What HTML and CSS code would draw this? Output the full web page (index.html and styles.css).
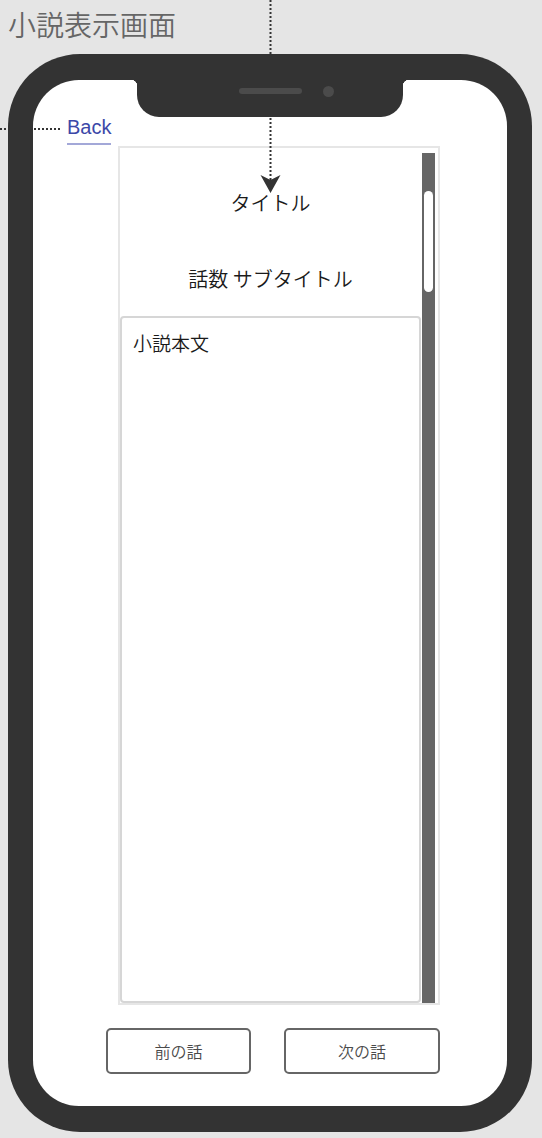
FILE: index.html
```html
<!DOCTYPE html>
<html lang="ja">
<head>
  <meta charset="UTF-8" />
  <meta name="viewport" content="width=device-width, initial-scale=1.0"/>
  <title>小説表示画面</title>
  <link rel="stylesheet" href="styles.css">
</head>
<body>
  <h1 class="page-title">小説表示画面</h1>

  <div class="phone">
    <div class="screen">
      <div class="notch">
        <span class="speaker"></span>
        <span class="camera"></span>
      </div>

      <div class="back-row">
        <a href="#" class="back-link">Back</a>
      </div>

      <div class="panel">
        <div class="reader">
          <div class="heading">
            <p class="novel-title">タイトル</p>
            <p class="episode-title">話数 サブタイトル</p>
          </div>
          <div class="novel-body">小説本文</div>
        </div>
        <div class="scrollbar">
          <div class="scroll-thumb"></div>
        </div>
      </div>

      <div class="nav-buttons">
        <button type="button" class="nav-btn prev">前の話</button>
        <button type="button" class="nav-btn next">次の話</button>
      </div>
    </div>
  </div>

  <!-- annotation lines drawn over the mockup (skipping the phone frame) -->
  <svg class="annotation" width="542" height="200" viewBox="0 0 542 200">
    <line x1="270.5" y1="0" x2="270.5" y2="54" stroke="#333" stroke-width="2" stroke-dasharray="2 2"/>
    <line x1="270.5" y1="118" x2="270.5" y2="180" stroke="#333" stroke-width="2" stroke-dasharray="2 2"/>
    <line x1="0" y1="129" x2="8" y2="129" stroke="#333" stroke-width="2" stroke-dasharray="2 2"/>
    <line x1="34" y1="129" x2="60" y2="129" stroke="#333" stroke-width="2" stroke-dasharray="2 2"/>
    <path d="M260.5 175 L270.5 180 L280.5 175 L270.5 193 Z" fill="#333"/>
  </svg>
</body>
</html>
```

FILE: styles.css
```css
body {
  margin: 0;
  height: 1138px;
  overflow: hidden;
  position: relative;
  background-color: #e5e5e5;
  font-family: "Noto Sans CJK JP", sans-serif;
  color: #1a1a1a;
}

.page-title {
  margin: 0;
  padding: 10px 0 0 8px;
  font-size: 28px;
  line-height: 28px;
  font-weight: 350;
  color: #666;
}

.phone {
  margin: 16px 0 0 8px;
  width: 524px;
  height: 1078px;
  box-sizing: border-box;
  padding: 26px 25px;
  background-color: #333;
  border-radius: 72px;
}

.screen {
  position: relative;
  height: 100%;
  box-sizing: border-box;
  padding-top: 35px;
  background-color: white;
  border-radius: 46px;
}

.notch {
  position: absolute;
  top: 0;
  left: 104px;
  width: 266px;
  height: 37px;
  box-sizing: border-box;
  padding: 0 0 15px 102px;
  display: flex;
  align-items: center;
  gap: 21px;
  background-color: #333;
  border-radius: 0 0 22px 22px;
}

.notch::before,
.notch::after {
  content: "";
  position: absolute;
  top: 0;
  width: 6px;
  height: 6px;
}

.notch::before {
  left: -6px;
  background: radial-gradient(circle at 0 100%, transparent 6px, #333 6.5px);
}

.notch::after {
  right: -6px;
  background: radial-gradient(circle at 100% 100%, transparent 6px, #333 6.5px);
}

.speaker {
  width: 63px;
  height: 6px;
  border-radius: 3px;
  background-color: #4b4b4b;
}

.camera {
  width: 11px;
  height: 11px;
  border-radius: 50%;
  background-color: #4b4b4b;
}

.back-row {
  margin-left: 34px;
  height: 31px;
}

.back-link {
  display: inline-block;
  font-family: "Liberation Sans", Arial, sans-serif;
  font-size: 20px;
  line-height: 20px;
  color: #3c48a8;
  text-decoration: none;
  padding-bottom: 6px;
  border-bottom: 2px solid #a3a8d8;
}

.panel {
  margin-left: 85px;
  width: 322px;
  height: 859px;
  box-sizing: border-box;
  padding-right: 3px;
  border: 2px solid #e6e6e6;
  display: flex;
}

.reader {
  width: 301px;
  display: flex;
  flex-direction: column;
}

.heading {
  height: 168px;
  box-sizing: border-box;
  padding-top: 45px;
  text-align: center;
}

.heading p {
  margin: 0;
  font-size: 20px;
  line-height: 20px;
  font-weight: 350;
}

.heading .episode-title {
  margin-top: 56px;
}

.novel-body {
  flex: 1;
  padding: 15px 11px;
  border: 2px solid #d6d6d6;
  border-radius: 4px;
  font-size: 19px;
  line-height: 19px;
  font-weight: 350;
}

.scrollbar {
  width: 13px;
  margin: 5px 0 0 1px;
  padding-top: 38px;
  box-sizing: border-box;
  display: flex;
  justify-content: center;
  align-items: flex-start;
  background-color: #666;
}

.scroll-thumb {
  width: 9px;
  height: 101px;
  border-radius: 5px;
  background-color: white;
}

.nav-buttons {
  display: flex;
  gap: 33px;
  margin: 23px 0 0 73px;
}

.nav-btn {
  height: 46px;
  font-family: inherit;
  font-size: 16px;
  font-weight: 350;
  color: #4a4a4a;
  background-color: white;
  border: 2px solid #666;
  border-radius: 5px;
}

.nav-btn.prev {
  width: 145px;
}

.nav-btn.next {
  width: 156px;
}

.annotation {
  position: absolute;
  top: 0;
  left: 0;
  pointer-events: none;
}
```
